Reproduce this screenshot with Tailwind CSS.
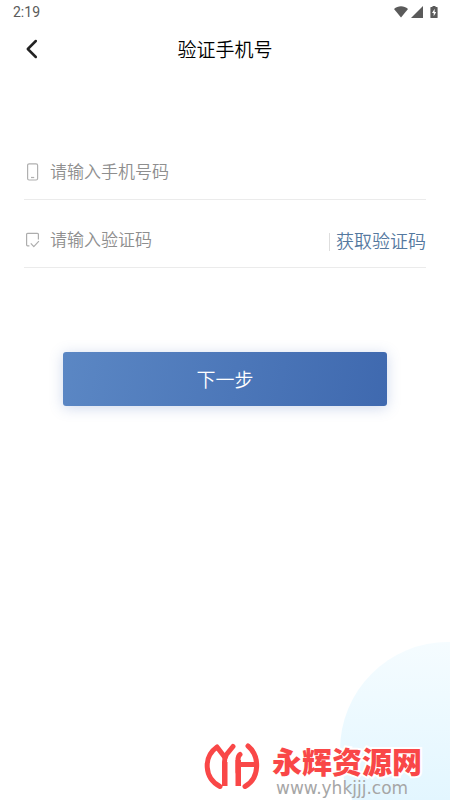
<!DOCTYPE html>
<html lang="zh-CN">
<head>
<meta charset="utf-8">
<meta name="viewport" content="width=device-width, initial-scale=1">
<title>验证手机号</title>
<script src="https://cdn.jsdelivr.net/npm/@tailwindcss/browser@4"></script>
</head>
<body class="bg-white font-['Roboto','Noto_Sans_CJK_SC',sans-serif]">
<div class="relative isolate flex min-h-screen flex-col overflow-hidden">
  <!-- Corner decoration -->
  <div class="absolute -right-[106px] -bottom-[58px] -z-10 size-[216px] rounded-full bg-linear-to-b from-[#f5fcff] to-[#dcf4ff]"></div>

  <!-- Status bar -->
  <div class="flex h-6 items-center justify-between pr-3 pl-[13px] text-[#5a5a5a]">
    <span class="text-sm leading-6">2:19</span>
    <div class="flex items-center gap-[3px]">
      <svg class="h-3 w-[14px]" viewBox="0 0 14 12" fill="currentColor" aria-hidden="true"><path d="M0 3C4-.6 10-.6 14 3L7 11.6Z"/></svg>
      <svg class="h-3 w-3" viewBox="0 0 12 12" fill="currentColor" aria-hidden="true"><path d="M12 0V12H0Z"/></svg>
      <svg class="ml-1 h-3 w-2" viewBox="0 0 8 12" aria-hidden="true"><path fill="currentColor" d="M2.500 0h3v1H7q.6 0 .6.6v9.800q0 .6-.6.6H1q-.6 0-.6-.6V1.600Q.4 1 1 1h1.500Z"/><path fill="#fff" d="M4.700 2.800 2 7h1.700v3.200L6.200 6H4.600Z"/></svg>
    </div>
  </div>

  <!-- Title bar -->
  <header class="grid h-[50px] grid-cols-[1fr_auto_1fr] items-center px-5">
    <button type="button" aria-label="返回" class="flex size-6 items-center justify-center text-[#222]">
      <svg class="h-5 w-4" viewBox="0 0 16 20" fill="none" stroke="currentColor" stroke-width="2.500" stroke-linecap="round" stroke-linejoin="round" aria-hidden="true"><path d="M11.800 2 3.800 10l8 8"/></svg>
    </button>
    <h1 class="pt-1 text-[19px] leading-6 font-[350] text-black">验证手机号</h1>
  </header>

  <main>
    <form class="px-6 pt-[70px]">
      <div class="flex h-14 items-center border-b border-[#ebebeb]">
        <label for="phone" class="flex w-[26px] text-[#b0b0b0]" aria-label="手机号码">
          <svg class="h-[18px] w-4" viewBox="0 0 16 18" fill="none" stroke="currentColor" stroke-width="1.200" aria-hidden="true"><rect x="3.600" y=".8" width="10" height="16.200" rx="1.500"/><path d="M7 14.500h3.200"/></svg>
        </label>
        <input id="phone" type="tel" placeholder="请输入手机号码" class="h-8 min-w-0 flex-1 bg-transparent text-[17px] font-[350] text-[#333] outline-none placeholder:text-[#8e8e8e]">
      </div>
      <div class="mt-3 flex h-14 items-center border-b border-[#ebebeb]">
        <label for="code" class="flex w-[26px] text-[#adadad]" aria-label="验证码">
          <svg class="h-[18px] w-4" viewBox="0 0 16 18" fill="none" stroke="currentColor" stroke-width="1.200" stroke-linejoin="round" aria-hidden="true"><path d="M14.400 8.500V3.300q0-1-1-1H3.600q-1 0-1 1v10.500q0 1 1 1h1.800M6.800 12.400l3 3.200 5.100-5.400"/></svg>
        </label>
        <input id="code" type="text" inputmode="numeric" placeholder="请输入验证码" class="h-8 min-w-0 flex-1 bg-transparent text-[17px] font-[350] text-[#333] outline-none placeholder:text-[#8e8e8e]">
        <button type="button" class="flex items-center gap-1.5 pt-1 text-lg leading-6 font-[350] text-[#55799f]"><span class="h-[18px] w-px bg-[#dedede]"></span>获取验证码</button>
      </div>
      <div class="px-[39px] pt-[84px]">
        <button type="submit" class="h-[54px] w-full rounded-[3px] bg-linear-100 from-[#5b87c4] to-[#3f69af] pt-1 text-[19px] font-[350] text-white shadow-[0_2px_14px_rgba(64,105,185,0.25)]">下一步</button>
      </div>
    </form>
  </main>

  <!-- Site mark -->
  <footer class="mt-auto flex items-end justify-end gap-3 pr-7 pb-0.5">
    <svg class="mb-1.5 h-[50px] w-14" viewBox="0 0 56 50" fill="none" stroke="#f94747" stroke-width="5" stroke-linecap="round" stroke-linejoin="round" aria-hidden="true">
      <path d="M16 44.500C0 36 -1 15 13 5L21 15.500"/>
      <path d="M29 4.500 22.500 12.500Q20.500 15.500 20.500 20V30"/>
      <path d="M44 4C56 14 56 36 41 44.500"/>
      <path d="M36 12.500Q34 14 34 18V30M34 22.500H51"/>
      <path d="M18 20h5.500v24H18ZM31.500 18H37v26h-5.500Z" fill="#f94747" stroke="none"/>
    </svg>
    <div>
      <p class="font-['Noto_Sans_CJK_SC',sans-serif] text-3xl leading-9 font-black text-[#f94747] [-webkit-text-stroke:4px_white] [paint-order:stroke_fill]">永辉资源网</p>
      <p class="pl-1 font-['DejaVu_Sans',sans-serif] text-[17px] leading-5 text-[#a6a6a6]">www.yhkjjj.com</p>
    </div>
  </footer>
</div>
</body>
</html>
